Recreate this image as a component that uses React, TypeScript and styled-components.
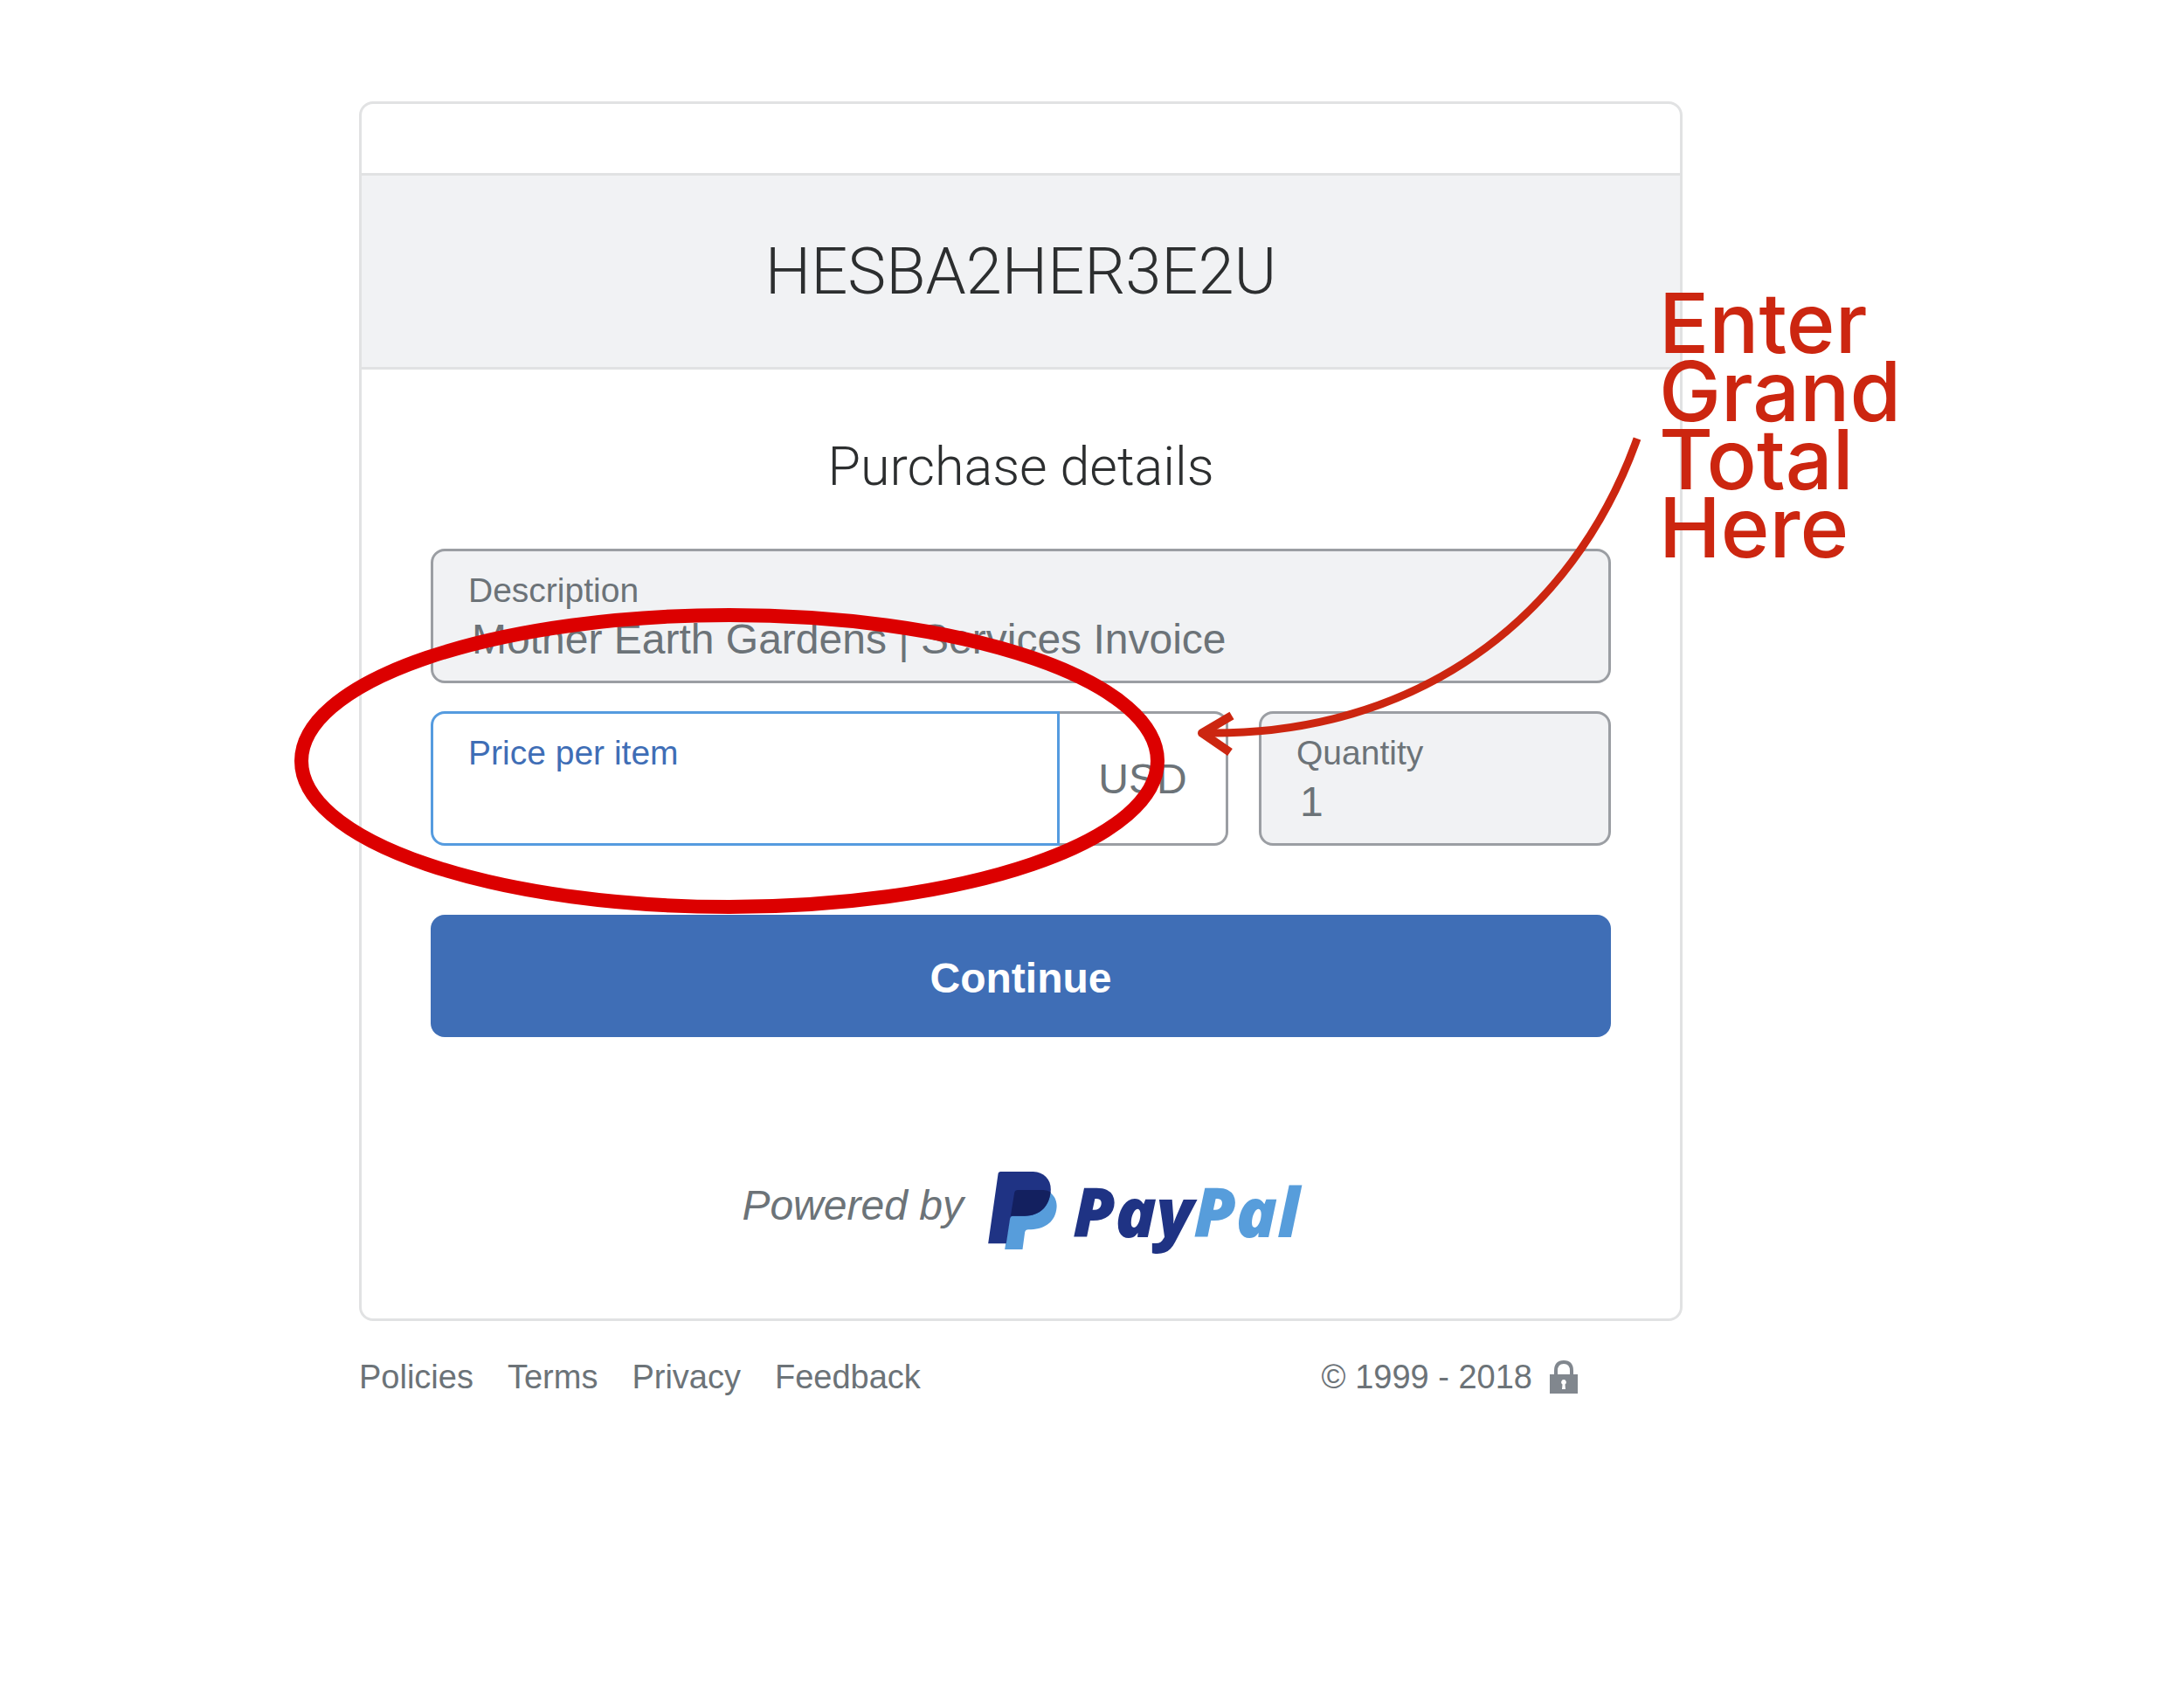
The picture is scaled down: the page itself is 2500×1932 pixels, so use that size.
import React from 'react';
import styled, { createGlobalStyle, css } from 'styled-components';

const sans = '"Liberation Sans", Arial, sans-serif';
const light = 'Roboto, "Liberation Sans", sans-serif';

const color = {
  line: '#e1e2e3',
  panel: '#f1f2f4',
  ink: '#2c2e2f',
  muted: '#6c7378',
  field: '#9b9ea3',
  focus: '#559bdf',
  blue: '#3f6eb6',
  note: '#cc2610',
  ring: '#dc0000',
};

const GlobalStyle = createGlobalStyle`
  *, *::before, *::after { box-sizing: border-box; }
  body { margin: 0; background: #fff; font-family: ${sans}; color: ${color.muted}; }
`;

const Page = styled.div`
  padding: 116px 574px 116px 411px;
`;

const Stage = styled.div`
  position: relative;
`;

const Card = styled.main`
  border: 3px solid ${color.line};
  border-radius: 16px;
`;

const TopStrip = styled.div`
  height: 79px;
`;

const Merchant = styled.header`
  display: flex;
  justify-content: center;
  padding: 64px 79px;
  border: solid ${color.line};
  border-width: 3px 0;
  background: ${color.panel};
`;

const MerchantName = styled.h1`
  margin: 0;
  font: 300 74px/91px ${light};
  color: ${color.ink};
`;

const Form = styled.form`
  display: flex;
  flex-direction: column;
  padding: 79px;
`;

const FormTitle = styled.h2`
  margin: 0 0 62px;
  font: 300 61px/64px ${light};
  text-align: center;
  color: ${color.ink};
`;

const Fields = styled.div`
  display: grid;
  grid-template-columns: 1fr 403px;
  gap: 32px 35px;
`;

const Field = styled.div<{ $wide?: boolean; $active?: boolean; $joined?: boolean }>`
  display: flex;
  flex-direction: column;
  flex: 1;
  min-width: 0;
  height: 154px;
  padding: 21px 40px 0;
  border: 3px solid ${(p) => (p.$active ? color.focus : color.field)};
  border-radius: ${(p) => (p.$joined ? '16px 0 0 16px' : '16px')};
  background: ${(p) => (p.$active ? '#fff' : color.panel)};
  ${(p) =>
    p.$wide &&
    css`
      grid-column: 1 / -1;
    `}
`;

const Label = styled.label<{ $active?: boolean }>`
  font-size: 39px;
  line-height: 48px;
  color: ${(p) => (p.$active ? color.blue : color.muted)};
`;

const Input = styled.input`
  width: 100%;
  height: 64px;
  padding: 0 4px;
  border: 0;
  outline: 0;
  background: transparent;
  font: 48px/64px ${sans};
  color: ${color.muted};
`;

const PriceGroup = styled.div`
  display: flex;
`;

const Currency = styled.span`
  display: flex;
  align-items: center;
  justify-content: center;
  width: 193px;
  border: 3px solid ${color.field};
  border-left: 0;
  border-radius: 0 16px 16px 0;
  font-size: 48px;
`;

const Submit = styled.button`
  height: 140px;
  margin-top: 79px;
  padding: 6px 0 0;
  border: 0;
  border-radius: 16px;
  background: ${color.blue};
  font: bold 48px/56px ${sans};
  color: #fff;
`;

const Powered = styled.div`
  display: flex;
  align-items: center;
  justify-content: center;
  gap: 28px;
  height: 89px;
  margin-top: 154px;
`;

const PoweredText = styled.span`
  padding-bottom: 12px;
  font-size: 48px;
  line-height: 56px;
  font-style: italic;
`;

const Logo = styled.span`
  display: flex;
  align-items: center;
  gap: 18px;
`;

const Wordmark = styled.span`
  font: italic 800 78px/88px "Open Sans", sans-serif;
  color: #1f3384;

  em { color: #579ddb; }
`;

const Footer = styled.footer`
  display: flex;
  align-items: center;
  justify-content: space-between;
  padding: 40px 120px 0 0;
  font-size: 38px;
  line-height: 48px;
`;

const FooterLinks = styled.nav`
  display: flex;
  gap: 39px;
`;

const FooterLink = styled.a`
  color: inherit;
  text-decoration: none;
`;

const Copyright = styled.span`
  display: flex;
  align-items: center;
  gap: 20px;
`;

const Marks = styled.svg`
  position: absolute;
  top: 0;
  left: -100px;
  width: 1700px;
  height: 1000px;
  pointer-events: none;
`;

const Note = styled.p`
  position: absolute;
  top: 215px;
  left: 1488px;
  margin: 0;
  font: 500 95px/78px Inter, sans-serif;
  color: ${color.note};
`;

const NoteLine = styled.span`
  display: block;
`;

function Monogram() {
  return (
    <svg width="79" height="89" viewBox="0 0 236 267" aria-hidden="true">
      <path
        fill="#579ddb"
        d="M210 70C230 84 239 105 234 132C226 177 190 199 138 199Q128 199 126 208L118 267H57L75 150Z"
      />
      <path
        fill="#1f3384"
        d="M43 0H155C190 2 216 25 215 62C213 115 180 152 125 152H86Q77 152 75 161L62 247H0L34 8Q35 0 43 0Z"
      />
      <path fill="#13205f" d="M102 63H190Q204 64 214 70C209 119 178 152 125 152H77L90 73Q92 63 102 63Z" />
    </svg>
  );
}

function Lock() {
  return (
    <svg width="32" height="38" viewBox="0 0 32 38" aria-hidden="true">
      <path fill="none" stroke="#81878e" strokeWidth="4" d="M7 18V12C7 5 10 2 16 2S25 5 25 12V18" />
      <path
        fill="#81878e"
        fillRule="evenodd"
        d="M0 16H32V38H0ZM16 22A3 3 0 0 0 14.500 27.500L14 33H18L17.500 27.500A3 3 0 0 0 16 22Z"
      />
    </svg>
  );
}

const links = ['Policies', 'Terms', 'Privacy', 'Feedback'];
const noteLines = ['Enter', 'Grand', 'Total', 'Here'];

export default function App() {
  return (
    <Page>
      <GlobalStyle />
      <Stage>
        <Card>
          <TopStrip />
          <Merchant>
            <MerchantName>HESBA2HER3E2U</MerchantName>
          </Merchant>
          <Form onSubmit={(e) => e.preventDefault()}>
            <FormTitle>Purchase details</FormTitle>
            <Fields>
              <Field $wide>
                <Label htmlFor="description">Description</Label>
                <Input id="description" readOnly value="Mother Earth Gardens | Services Invoice" />
              </Field>
              <PriceGroup>
                <Field $active $joined>
                  <Label htmlFor="price" $active>
                    Price per item
                  </Label>
                  <Input id="price" inputMode="decimal" />
                </Field>
                <Currency>USD</Currency>
              </PriceGroup>
              <Field>
                <Label htmlFor="quantity">Quantity</Label>
                <Input id="quantity" readOnly value="1" />
              </Field>
            </Fields>
            <Submit type="submit">Continue</Submit>
            <Powered>
              <PoweredText>Powered by</PoweredText>
              <Logo>
                <Monogram />
                <Wordmark>
                  Pay<em>Pal</em>
                </Wordmark>
              </Logo>
            </Powered>
          </Form>
        </Card>
        <Footer>
          <FooterLinks>
            {links.map((text) => (
              <FooterLink key={text} href="#">
                {text}
              </FooterLink>
            ))}
          </FooterLinks>
          <Copyright>
            © 1999 - 2018
            <Lock />
          </Copyright>
        </Footer>
        <Marks viewBox="311 116 1700 1000" fill="none" aria-hidden="true">
          <ellipse cx="835" cy="871" rx="490" ry="167" stroke={color.ring} strokeWidth="16" />
          <g stroke={color.note} strokeWidth="10">
            <path d="M1874 502C1800 710 1620 842 1380 839" strokeWidth="9" />
            <path d="M1410 819L1376 839L1408 861" strokeLinejoin="round" />
          </g>
        </Marks>
        <Note>
          {noteLines.map((text) => (
            <NoteLine key={text}>{text}</NoteLine>
          ))}
        </Note>
      </Stage>
    </Page>
  );
}
